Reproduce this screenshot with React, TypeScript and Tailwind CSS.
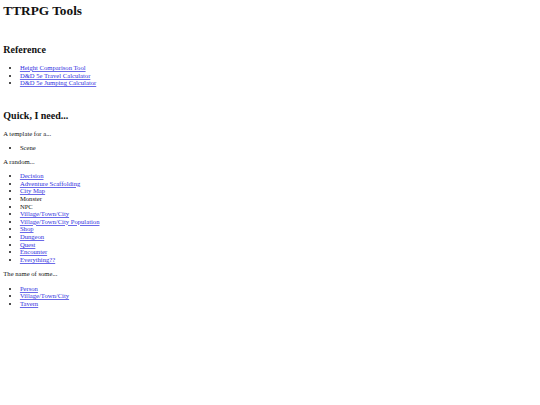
import React from 'react';

type Item = { label: string; link?: boolean };

const reference: Item[] = [
  { label: 'Height Comparison Tool', link: true },
  { label: 'D&D 5e Travel Calculator', link: true },
  { label: 'D&D 5e Jumping Calculator', link: true },
];

const templates: Item[] = [{ label: 'Scene' }];

const randoms: Item[] = [
  { label: 'Decision', link: true },
  { label: 'Adventure Scaffolding', link: true },
  { label: 'City Map', link: true },
  { label: 'Monster' },
  { label: 'NPC' },
  { label: 'Village/Town/City', link: true },
  { label: 'Village/Town/City Population', link: true },
  { label: 'Shop', link: true },
  { label: 'Dungeon', link: true },
  { label: 'Quest', link: true },
  { label: 'Encounter', link: true },
  { label: 'Everything??', link: true },
];

const names: Item[] = [
  { label: 'Person', link: true },
  { label: 'Village/Town/City', link: true },
  { label: 'Tavern', link: true },
];

const List: React.FC<{ items: Item[]; className?: string }> = ({ items, className }) => (
  <ul className={`list-disc pl-[16.6px] ${className ?? ''}`}>
    {items.map((item, i) => (
      <li key={i}>
        {item.link ? (
          <a href="#" className="text-[#3030e0] underline decoration-[#6a6ae8]">
            {item.label}
          </a>
        ) : (
          item.label
        )}
      </li>
    ))}
  </ul>
);

export default function App() {
  return (
    <div className="min-h-screen bg-white text-[#111] px-[3.3px] pt-[3.35px] text-[6.64px] leading-[7.64px] font-[family-name:Liberation_Serif,serif]">
      <h1 className="text-[13.3px] font-bold leading-[15.3px] mb-[25.4px]">TTRPG Tools</h1>

      <h2 className="text-[10px] font-bold leading-[11.5px] mb-[8.4px]">Reference</h2>
      <List items={reference} className="mb-[23.2px]" />

      <h2 className="text-[10px] font-bold leading-[11.5px] mb-[8.3px]">Quick, I need...</h2>
      <p className="mb-[6.64px]">A template for a...</p>
      <List items={templates} className="mb-[6.64px]" />

      <p className="mb-[6px]">A random...</p>
      <List items={randoms} className="mb-[6.64px]" />

      <p className="mb-[6.64px]">The name of some...</p>
      <List items={names} />
    </div>
  );
}
